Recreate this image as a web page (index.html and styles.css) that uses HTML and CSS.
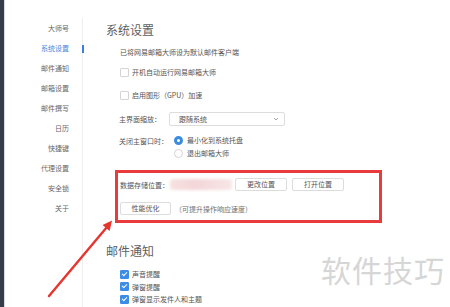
FILE: index.html
```html
<!DOCTYPE html>
<html lang="zh-CN">

<head>
    <meta charset="utf-8">
    <title>系统设置</title>
    <link rel="stylesheet" href="styles.css">
</head>

<body>
    <div class="app">
        <div class="edge"></div>

        <!-- Left navigation -->
        <ul class="nav">
            <li>大师号</li>
            <li class="active">系统设置</li>
            <li>邮件通知</li>
            <li>邮箱设置</li>
            <li>邮件撰写</li>
            <li>日历</li>
            <li>快捷键</li>
            <li>代理设置</li>
            <li>安全锁</li>
            <li>关于</li>
        </ul>

        <!-- Settings panel -->
        <div class="panel">
            <h2 class="section-title">系统设置</h2>
            <div class="line first">已将网易邮箱大师设为默认邮件客户端</div>

            <label class="check-row row-a"><span class="box"></span>开机自动运行网易邮箱大师</label>
            <label class="check-row row-b"><span class="box"></span>启用图形（GPU）加速</label>

            <div class="field-row zoom-row">
                <span class="field-label">主界面缩放：</span>
                <div class="select">
                    <span>跟随系统</span>
                    <svg class="chev" width="6" height="4" viewBox="0 0 6 4"><path d="M1 1 L3 3 L5 1" fill="none" stroke="#999" stroke-width="0.9"/></svg>
                </div>
            </div>

            <div class="field-row close-row">
                <span class="field-label">关闭主窗口时：</span>
                <div class="radios">
                    <label class="radio-row"><span class="radio on"></span>最小化到系统托盘</label>
                    <label class="radio-row"><span class="radio"></span>退出邮箱大师</label>
                </div>
            </div>

            <div class="highlight">
                <div class="store-row">
                    <span class="store-label">数据存储位置：</span>
                    <span class="blurred"></span>
                    <button class="btn btn-change">更改位置</button>
                    <button class="btn btn-open">打开位置</button>
                </div>
                <div class="store-row second">
                    <button class="btn btn-perf">性能优化</button>
                    <span class="hint">（可提升操作响应速度）</span>
                </div>
            </div>

            <h2 class="section-title notify">邮件通知</h2>
            <div class="checked-list">
                <label class="check-row"><span class="box checked"></span>声音提醒</label>
                <label class="check-row"><span class="box checked"></span>弹窗提醒</label>
                <label class="check-row"><span class="box checked"></span>弹窗显示发件人和主题</label>
            </div>
        </div>
    </div>

    <!-- annotation overlay -->
    <svg class="arrow" width="450" height="307" viewBox="0 0 450 307">
        <line x1="49" y1="296" x2="107" y2="227" stroke="#e8342f" stroke-width="2.4" stroke-linecap="round"/>
        <polygon points="112,220.5 102.6,225 109.6,231" fill="#e8342f"/>
    </svg>
    <div class="watermark">软件技巧</div>
</body>

</html>
```

FILE: styles.css
```css
/* Page */
body {
    margin: 0;
    width: 450px;
    height: 307px;
    overflow: hidden;
    background: #ffffff;
    font-family: "Noto Sans CJK SC", "Noto Sans", sans-serif;
    font-size: 7px;
    color: #555555;
    position: relative;
}

.app {
    display: flex;
    height: 307px;
}

.edge {
    width: 4px;
    background: #343d49;
    border-right: 1px solid #d8dadd;
}

/* Navigation */
.nav {
    list-style: none;
    margin: 18px 0 0 0;
    padding: 0 13px 0 0;
    width: 64px;
    border-right: 1px solid #eeeeee;
    text-align: right;
    position: relative;
}

.nav li {
    height: 20px;
    line-height: 20px;
    color: #666666;
    position: relative;
}

.nav li.active {
    color: #4a87db;
}

.nav li.active::after {
    content: "";
    position: absolute;
    right: -15px;
    top: 7px;
    width: 2px;
    height: 8px;
    background: #3b7fd9;
}

/* Panel */
.panel {
    flex: 1;
    padding-left: 23px;
}

.section-title {
    margin: 22px 0 0 0;
    font-size: 12px;
    line-height: 16px;
    font-weight: 400;
    color: #606060;
}

.line {
    line-height: 12px;
    margin-left: 14px;
}

.line.first {
    margin-top: 8px;
}

.check-row {
    display: flex;
    align-items: center;
    gap: 3px;
    height: 12px;
    margin-left: 14px;
}

.row-a {
    margin-top: 8px;
}

.row-b {
    margin-top: 11px;
}

.box {
    width: 7px;
    height: 7px;
    border: 1px solid #d4d4d4;
    border-radius: 1px;
    background: #ffffff;
    box-sizing: content-box;
}

.box.checked {
    border-color: #3d8de6;
    background: #3d8de6;
    position: relative;
}

.box.checked::after {
    content: "";
    position: absolute;
    left: 2px;
    top: 0px;
    width: 2px;
    height: 4px;
    border: solid #ffffff;
    border-width: 0 1px 1px 0;
    transform: rotate(45deg);
}

/* Field rows */
.field-row {
    display: flex;
    margin-left: 13px;
}

.field-label {
    width: 50px;
    line-height: 14px;
}

.zoom-row {
    margin-top: 11px;
    align-items: center;
}

.select {
    width: 100px;
    height: 12px;
    border: 1px solid #dddddd;
    border-radius: 2px;
    display: flex;
    align-items: center;
    justify-content: space-between;
    padding: 0 5px 0 9px;
}

.close-row {
    margin-top: 8px;
}

.radios {
    display: flex;
    flex-direction: column;
    gap: 1px;
    margin-left: 5px;
}

.radio-row {
    display: flex;
    align-items: center;
    gap: 4px;
    height: 12px;
}

.radio {
    width: 7px;
    height: 7px;
    border: 1px solid #d4d4d4;
    border-radius: 50%;
    box-sizing: content-box;
    background: #ffffff;
}

.radio.on {
    width: 3px;
    height: 3px;
    border: 3px solid #3b8be3;
}

/* Highlighted block */
.highlight {
    margin: 11px 0 0 9px;
    width: 259px;
    height: 47px;
    border: 3px solid #e93a3c;
    padding: 0 0 0 2px;
}

.store-row {
    display: flex;
    align-items: center;
    margin-top: 5px;
}

.store-row.second {
    margin-top: 11px;
}

.store-label {
    width: 50px;
}

.blurred {
    width: 62px;
    height: 11px;
    background: linear-gradient(90deg, #f7e1e1, #f3d6d8 40%, #f7e6e7);
    filter: blur(1.5px);
    border-radius: 3px;
}

.btn {
    height: 13px;
    padding: 0;
    border: 1px solid #dcdcdc;
    border-radius: 2px;
    background: #ffffff;
    font-family: inherit;
    font-size: 7px;
    color: #555555;
    line-height: 11px;
}

.btn-change {
    width: 52px;
    margin-left: 3px;
}

.btn-open {
    width: 52px;
    margin-left: 5px;
}

.btn-perf {
    width: 51px;
}

.hint {
    margin-left: 4px;
    color: #707070;
}

.section-title.notify {
    margin-top: 20px;
}

.checked-list {
    margin-top: 9px;
    display: flex;
    flex-direction: column;
    gap: 0.5px;
}

/* Overlays */
.arrow {
    position: absolute;
    left: 0;
    top: 0;
    pointer-events: none;
}

.watermark {
    position: absolute;
    left: 321px;
    top: 249px;
    font-size: 30px;
    letter-spacing: 1px;
    line-height: 40px;
    color: #d6d6d6;
}
```
